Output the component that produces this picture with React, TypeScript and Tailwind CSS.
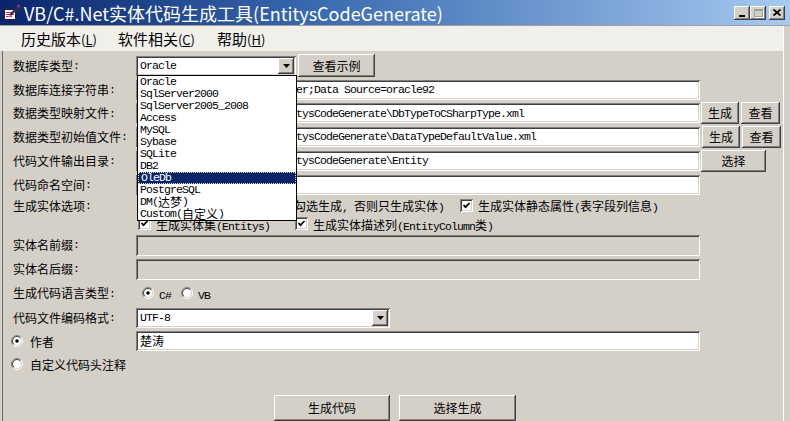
import React from "react";

const RAISED =
  "shadow-[inset_-1px_-1px_#404040,inset_1px_1px_#ffffff,inset_-2px_-2px_#808080,inset_2px_2px_#d4d0c8]";
const SUNKEN =
  "shadow-[inset_1px_1px_#808080,inset_-1px_-1px_#ffffff,inset_2px_2px_#404040,inset_-2px_-2px_#d4d0c8]";

function Mix({ text }: { text: string }) {
  const parts = text.match(/[\x00-\x7F]+|[^\x00-\x7F]+/g) || [];
  return (
    <>
      {parts.map((p, i) =>
        /^[\x00-\x7F]+$/.test(p) ? (
          <span
            key={i}
            className="font-['Liberation_Mono',monospace] text-[11.5px] tracking-[-0.9px] whitespace-pre"
          >
            {p}
          </span>
        ) : (
          <span key={i} className="font-['Noto_Sans_CJK_SC',sans-serif] text-[12px] whitespace-pre">
            {p}
          </span>
        )
      )}
    </>
  );
}

function Label({ t }: { t: string }) {
  return (
    <div className="w-[133px] pl-[10px] shrink-0 leading-none text-black flex items-center">
      <Mix text={t} />
    </div>
  );
}

function Btn({ t, w, h = 22, cls = "" }: { t: string; w: number; h?: number; cls?: string }) {
  return (
    <div
      className={`${RAISED} bg-[#d4d0c8] flex items-center justify-center shrink-0 leading-none ${cls}`}
      style={{ width: w, height: h }}
    >
      <span className="font-['Noto_Sans_CJK_SC',sans-serif] text-[12px]">{t}</span>
    </div>
  );
}

function TextBox({ text = "", w = 564, h = 20, disabled = false }: { text?: string; w?: number; h?: number; disabled?: boolean }) {
  return (
    <div
      className={`${SUNKEN} ${disabled ? "bg-[#d4d0c8]" : "bg-white"} flex items-center pl-[4px] shrink-0 overflow-hidden leading-none`}
      style={{ width: w, height: h }}
    >
      <Mix text={text} />
    </div>
  );
}

function Arrow() {
  return (
    <div className={`${RAISED} bg-[#d4d0c8] w-[16px] h-[16px] flex items-center justify-center shrink-0`}>
      <svg width="7" height="4" viewBox="0 0 7 4">
        <polygon points="0,0 7,0 3.5,4" fill="#000" />
      </svg>
    </div>
  );
}

function Combo({ text, w }: { text: string; w: number }) {
  return (
    <div
      className={`${SUNKEN} bg-white flex items-center justify-between pl-[4px] pr-[2px] shrink-0 leading-none`}
      style={{ width: w, height: 20 }}
    >
      <Mix text={text} />
      <Arrow />
    </div>
  );
}

function Check() {
  return (
    <div className={`${SUNKEN} bg-white w-[13px] h-[13px] flex items-center justify-center shrink-0`}>
      <svg width="9" height="9" viewBox="0 0 9 9">
        <polyline points="1.5,4 3.5,6.2 7.5,2" fill="none" stroke="#000" strokeWidth="1.8" />
      </svg>
    </div>
  );
}

function Radio({ on }: { on: boolean }) {
  return (
    <svg width="12" height="12" viewBox="0 0 12 12" className="shrink-0">
      <defs>
        <linearGradient id="ro" x1="0" y1="0" x2="1" y2="1">
          <stop offset="0.45" stopColor="#808080" />
          <stop offset="0.55" stopColor="#ffffff" />
        </linearGradient>
        <linearGradient id="ri" x1="0" y1="0" x2="1" y2="1">
          <stop offset="0.45" stopColor="#404040" />
          <stop offset="0.55" stopColor="#d4d0c8" />
        </linearGradient>
      </defs>
      <circle cx="6" cy="6" r="5.5" fill="none" stroke="url(#ro)" strokeWidth="1" />
      <circle cx="6" cy="6" r="4.5" fill="#fff" stroke="url(#ri)" strokeWidth="1" />
      {on && <circle cx="6" cy="6" r="1.8" fill="#000" />}
    </svg>
  );
}

function TitleBtn({ children }: { children: React.ReactNode }) {
  return (
    <div className={`${RAISED} bg-[#d4d0c8] w-[16px] h-[14px] flex items-center justify-center`}>{children}</div>
  );
}

const ITEMS = [
  "Oracle",
  "SqlServer2000",
  "SqlServer2005_2008",
  "Access",
  "MySQL",
  "Sybase",
  "SQLite",
  "DB2",
  "OleDb",
  "PostgreSQL",
  "DM(达梦)",
  "Custom(自定义)",
];

export default function App() {
  return (
    <div className="w-[790px] h-[421px] overflow-hidden bg-[#d4d0c8] relative flex flex-col text-black">
      {/* Title bar */}
      <div className="h-[25px] shrink-0 bg-gradient-to-r from-[#0a246a] via-[#3a6ab0] via-40% to-[#a6caf0] flex items-center relative">
        <svg width="17" height="17" viewBox="0 0 17 17" className="ml-[3px] shrink-0">
          <rect x="1.5" y="5.5" width="11" height="10" fill="#fff" stroke="#222" />
          <line x1="3" y1="8.5" x2="11" y2="8.5" stroke="#d0287a" />
          <line x1="3" y1="10.5" x2="11" y2="10.5" stroke="#d0287a" />
          <line x1="3" y1="12.5" x2="9" y2="12.5" stroke="#d0287a" />
          <polygon points="6,11 14,2 16,4 8,12" fill="#3a2a4a" />
          <polygon points="14,2 15.5,0.5 17,2 16,4" fill="#c03070" />
          <polygon points="6,11 8,12 5,13" fill="#e0c080" />
        </svg>
        <span className="ml-[4px] text-white text-[18px] font-['Noto_Sans_CJK_SC',sans-serif] leading-none whitespace-nowrap">
          VB/C#.Net实体代码生成工具(EntitysCodeGenerate)
        </span>
        <div className="ml-auto mr-[5px] flex items-center">
          <TitleBtn>
            <div className="w-[6px] h-[2px] bg-black mt-[6px] -ml-[1px]" />
          </TitleBtn>
          <TitleBtn>
            <div className="w-[9px] h-[8px] border border-[#a0a0a0] border-t-2 shadow-[1px_1px_#ffffff]" />
          </TitleBtn>
          <div className="w-[3px]" />
          <TitleBtn>
            <svg width="8" height="7" viewBox="0 0 8 7">
              <path d="M0.5 0.5 L7.5 6.5 M7.5 0.5 L0.5 6.5" stroke="#000" strokeWidth="1.8" />
            </svg>
          </TitleBtn>
        </div>
      </div>
      <div className="flex-1 flex min-h-0 border-t border-[#a0a0a0]">
        <div className="flex-1 flex flex-col min-w-0">
          {/* Menu bar */}
          <div className="h-[25px] shrink-0 bg-[#f0efea] flex items-center font-['Noto_Sans_CJK_SC',sans-serif] leading-none">
            <div className="ml-[21px] flex items-baseline">
              <span className="text-[15px]">历史版本</span>
              <span className="text-[13px]">(<span className="underline">L</span>)</span>
            </div>
            <div className="ml-[21px] flex items-baseline">
              <span className="text-[15px]">软件相关</span>
              <span className="text-[13px]">(<span className="underline">C</span>)</span>
            </div>
            <div className="ml-[22px] flex items-baseline">
              <span className="text-[15px]">帮助</span>
              <span className="text-[13px]">(<span className="underline">H</span>)</span>
            </div>
          </div>
          {/* Body */}
          <div className="flex-1 flex min-h-0">
            <div className="w-[3px] shrink-0 border-r border-[#6a6a6a]" />
            <div className="flex-1 flex flex-col pt-[3px] min-w-0">
              <div className="h-[24px] flex items-center">
                <Label t="数据库类型:" />
                <Combo text="Oracle" w={160} />
                <Btn t="查看示例" w={77} h={23} cls="ml-[2px]" />
              </div>
              <div className="h-[24px] flex items-center">
                <Label t="数据库连接字符串:" />
                <TextBox text="Password=123;User ID=orauser;Data Source=oracle92" />
              </div>
              <div className="h-[24px] flex items-center">
                <Label t="数据类型映射文件:" />
                <TextBox text="C:\Program Files\Code\EntitysCodeGenerate\DbTypeToCSharpType.xml" />
                <Btn t="生成" w={38} cls="ml-[1px]" />
                <Btn t="查看" w={39} cls="ml-[2px]" />
              </div>
              <div className="h-[24px] flex items-center">
                <Label t="数据类型初始值文件:" />
                <TextBox text="C:\Program Files\Code\EntitysCodeGenerate\DataTypeDefaultValue.xml" />
                <Btn t="生成" w={38} cls="ml-[2px]" />
                <Btn t="查看" w={39} cls="ml-[2px]" />
              </div>
              <div className="h-[24px] flex items-center">
                <Label t="代码文件输出目录:" />
                <TextBox text="C:\Program Files\Code\EntitysCodeGenerate\Entity" />
                <Btn t="选择" w={65} cls="ml-[1px]" />
              </div>
              <div className="h-[24px] flex items-center">
                <Label t="代码命名空间:" />
                <TextBox text="" />
              </div>
              <div className="h-[18px] flex items-center">
                <Label t="生成实体选项:" />
                <div className="w-[324px] flex items-center pl-[2px] leading-none">
                  <Check />
                  <span className="ml-[5px] whitespace-nowrap">
                    <Mix text="生成实体部分类方法(如果勾选生成, 否则只生成实体)" />
                  </span>
                </div>
                <Check />
                <span className="ml-[5px] whitespace-nowrap leading-none">
                  <Mix text="生成实体静态属性(表字段列信息)" />
                </span>
              </div>
              <div className="h-[19px] flex items-center">
                <div className="w-[133px] shrink-0" />
                <div className="w-[159px] flex items-center pl-[2px] leading-none">
                  <Check />
                  <span className="ml-[5px] whitespace-nowrap">
                    <Mix text="生成实体集(Entitys)" />
                  </span>
                </div>
                <Check />
                <span className="ml-[5px] whitespace-nowrap leading-none">
                  <Mix text="生成实体描述列(EntityColumn类)" />
                </span>
              </div>
              <div className="h-[24px] flex items-center">
                <Label t="实体名前缀:" />
                <TextBox disabled h={21} />
              </div>
              <div className="h-[24px] flex items-center">
                <Label t="实体名后缀:" />
                <TextBox disabled h={21} />
              </div>
              <div className="h-[25px] flex items-center">
                <Label t="生成代码语言类型:" />
                <div className="ml-[6px] flex items-center leading-none">
                  <Radio on />
                  <span className="ml-[5px]">
                    <Mix text="C#" />
                  </span>
                  <div className="ml-[10px]">
                    <Radio on={false} />
                  </div>
                  <span className="ml-[5px]">
                    <Mix text="VB" />
                  </span>
                </div>
              </div>
              <div className="h-[24px] flex items-center">
                <Label t="代码文件编码格式:" />
                <Combo text="UTF-8" w={254} />
              </div>
              <div className="h-[24px] flex items-center">
                <div className="w-[133px] shrink-0 pl-[8px] flex items-center leading-none">
                  <Radio on />
                  <span className="ml-[7px]">
                    <Mix text="作者" />
                  </span>
                </div>
                <TextBox text="楚涛" />
              </div>
              <div className="h-[22px] flex items-center">
                <div className="w-[133px] shrink-0 pl-[8px] flex items-center leading-none">
                  <Radio on={false} />
                  <span className="ml-[7px] whitespace-nowrap">
                    <Mix text="自定义代码头注释" />
                  </span>
                </div>
              </div>
              <div className="mt-[20px] flex">
                <Btn t="生成代码" w={116} h={26} cls="ml-[271px]" />
                <Btn t="选择生成" w={117} h={26} cls="ml-[9px]" />
              </div>
            </div>
          </div>
        </div>
        <div className="w-[7px] shrink-0 border-l border-white bg-[#d4d0c8]" />
      </div>

      {/* Open dropdown list */}
      <div className="absolute left-[137px] top-[75px] w-[160px] bg-white border border-black flex flex-col">
        {ITEMS.map((it) => (
          <div
            key={it}
            className={`h-[12px] pl-[2px] flex items-center leading-none whitespace-nowrap ${
              it === "OleDb" ? "bg-[#0a246a] text-white border border-dotted border-[#e8e0a0]" : ""
            }`}
          >
            <Mix text={it} />
          </div>
        ))}
      </div>
    </div>
  );
}
